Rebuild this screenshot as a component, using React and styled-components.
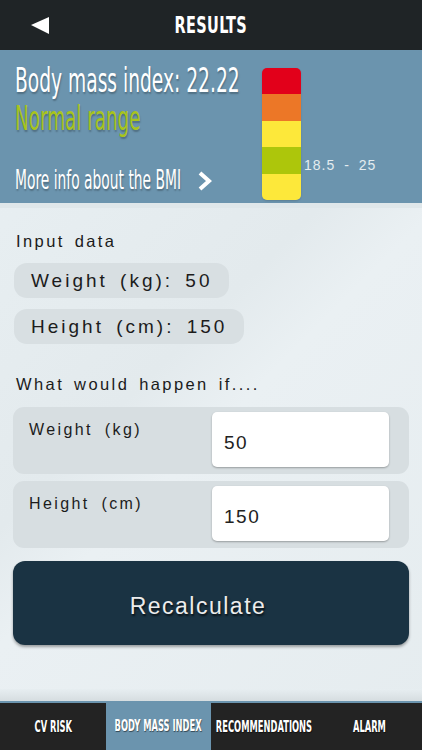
import React from 'react'
import styled, { createGlobalStyle } from 'styled-components'

const GlobalStyle = createGlobalStyle`
  html, body {
    margin: 0;
    padding: 0;
    background: #e7eef1;
  }
  * { box-sizing: border-box; }
`

const condensed = `"Liberation Sans Narrow", "DejaVu Sans Condensed", "Liberation Sans", sans-serif`
const body = `"Liberation Sans", "Noto Sans", sans-serif`

const Screen = styled.div`
  width: 422px;
  height: 750px;
  display: flex;
  flex-direction: column;
  background: linear-gradient(135deg, #eaf1f4 0%, #e3eaed 45%, #eaf0f3 55%, #e5ecef 100%);
  overflow: hidden;
`

const TopBar = styled.header`
  height: 50px;
  flex-shrink: 0;
  background: #1f2426;
  display: flex;
  align-items: center;
  justify-content: center;
  position: relative;
`

const BackButton = styled.button`
  position: absolute;
  left: 30px;
  top: 16px;
  width: 20px;
  height: 20px;
  padding: 0;
  border: none;
  background: none;
  display: flex;
`

const Title = styled.h1`
  margin: 0;
  color: #fff;
  font-family: ${condensed};
  font-weight: bold;
  font-size: 23px;
  letter-spacing: 0.5px;
  transform: scaleX(0.7);
`

const Hero = styled.section`
  height: 158px;
  flex-shrink: 0;
  background: #6b94ae;
  border-bottom: 5px solid #dfe7ea;
  display: flex;
  padding: 11px 0 0 15px;
`

const HeroText = styled.div`
  width: 247px;
  display: flex;
  flex-direction: column;
`

const Big = styled.div`
  font-family: ${condensed};
  font-size: ${p => p.size || 34}px;
  color: ${p => p.color || '#fff'};
  white-space: nowrap;
  transform: scaleX(${p => p.squeeze || 0.61});
  transform-origin: left center;
  text-shadow: 1px 2px 2px rgba(0, 0, 0, 0.25);
  line-height: ${p => p.lh || 38}px;
`

const MoreInfo = styled.a`
  margin-top: auto;
  margin-bottom: 8px;
  display: flex;
  align-items: center;
  color: #fff;
  text-decoration: none;
  position: relative;
  svg {
    position: absolute;
    left: 182px;
    top: 6px;
  }
`

const ScaleWrap = styled.div`
  display: flex;
  align-items: flex-start;
  padding-top: 7px;
`

const Scale = styled.div`
  width: 39px;
  height: 132px;
  border-radius: 5px;
  overflow: hidden;
  display: flex;
  flex-direction: column;
  box-shadow: 0 1px 2px rgba(0, 0, 0, 0.15);
`

const Band = styled.div`
  flex: 1;
  background: ${p => p.color};
`

const RangeLabel = styled.span`
  font-family: ${body};
  font-size: 14px;
  letter-spacing: 1px;
  word-spacing: 4px;
  color: #e4ecf0;
  margin: 89px 0 0 3px;
  white-space: nowrap;
`

const Content = styled.main`
  flex: 1;
  padding: 24px 13px 0 13px;
  display: flex;
  flex-direction: column;
`

const Label = styled.div`
  font-family: ${body};
  font-size: 16.5px;
  letter-spacing: 2.4px;
  word-spacing: 3px;
  color: #1b1b1b;
  padding-left: 3px;
  margin-top: ${p => p.mt || 0}px;
  margin-bottom: ${p => p.mb || 12}px;
`

const Pill = styled.div`
  align-self: flex-start;
  height: 35px;
  margin: 0 0 11px 1px;
  padding: 0 17px;
  display: flex;
  align-items: center;
  border-radius: 13px;
  background: #d8dfe2;
  font-family: ${body};
  font-size: 19px;
  letter-spacing: 3px;
  color: #1c1c1c;
  word-spacing: 4px;
`

const Card = styled.div`
  height: 67px;
  margin-bottom: 7px;
  border-radius: 11px;
  background: #d7dee1;
  display: flex;
  justify-content: space-between;
  padding: 5px 20px 0 16px;
`

const CardLabel = styled.span`
  font-family: ${body};
  font-size: 16px;
  letter-spacing: 2.4px;
  word-spacing: 5px;
  color: #1c1c1c;
  padding-top: 9px;
`

const Field = styled.input`
  width: 177px;
  height: 55px;
  border: none;
  border-radius: 5px;
  background: #fff;
  box-shadow: 0 1px 2px rgba(0, 0, 0, 0.3);
  padding: 6px 0 0 12px;
  font-family: ${body};
  font-size: 19px;
  letter-spacing: 1.5px;
  color: #222;
  outline: none;
`

const Recalc = styled.button`
  margin-top: 6px;
  height: 84px;
  border: none;
  border-radius: 12px;
  background: #1a3343;
  box-shadow: 0 2px 3px rgba(0, 0, 0, 0.35);
  color: #ececec;
  font-family: ${body};
  font-size: 23px;
  letter-spacing: 1.5px;
  padding: 6px 26px 0 0;
  text-shadow: 1px 2px 2px rgba(0, 0, 0, 0.7);
`

const Fade = styled.div`
  height: 12px;
  flex-shrink: 0;
  background: linear-gradient(#e7eef1, #d6dde0);
`

const TabBar = styled.nav`
  height: 49px;
  flex-shrink: 0;
  border-top: 2px solid #6b94ae;
  background: #232323;
  display: grid;
  grid-template-columns: 106px 105px 105px 106px;
`

const Tab = styled.div`
  display: flex;
  align-items: center;
  justify-content: center;
  background: ${p => (p.active ? '#6b94ae' : 'transparent')};
  margin-top: ${p => (p.active ? '-2px' : '0')};
  span {
    font-family: ${condensed};
    font-weight: bold;
    font-size: 16px;
    color: #fff;
    white-space: nowrap;
    transform: scaleX(0.58);
    text-shadow: 1px 1px 1px rgba(0, 0, 0, 0.5);
  }
`

const bands = ['#e2001a', '#ec7727', '#fde83a', '#adc60b', '#fde83a']
const tabs = ['CV RISK', 'BODY MASS INDEX', 'RECOMMENDATIONS', 'ALARM']

const App = () => {
  return (
    <>
      <GlobalStyle />
      <Screen>
        <TopBar>
          <BackButton aria-label="Back">
            <svg width="20" height="20" viewBox="0 0 20 20">
              <polygon points="1,9 19,1 19,18" fill="#fff" />
            </svg>
          </BackButton>
          <Title>RESULTS</Title>
        </TopBar>

        <Hero>
          <HeroText>
            <Big>Body mass index: 22.22</Big>
            <Big color="#a8c41c" squeeze={0.6}>Normal range</Big>
            <MoreInfo href="#">
              <Big size={27} squeeze={0.57} lh={30}>More info about the BMI</Big>
              <svg width="16" height="20" viewBox="0 0 16 20">
                <polyline points="3,2 12,10 3,18" fill="none" stroke="#fff" strokeWidth="4" />
              </svg>
            </MoreInfo>
          </HeroText>
          <ScaleWrap>
            <Scale>
              {bands.map((c, i) => <Band key={i} color={c} />)}
            </Scale>
            <RangeLabel>18.5 - 25</RangeLabel>
          </ScaleWrap>
        </Hero>

        <Content>
          <Label>Input data</Label>
          <Pill>Weight (kg): 50</Pill>
          <Pill>Height (cm): 150</Pill>
          <Label mt={20} mb={13}>What would happen if....</Label>
          <Card>
            <CardLabel>Weight (kg)</CardLabel>
            <Field defaultValue="50" />
          </Card>
          <Card>
            <CardLabel>Height (cm)</CardLabel>
            <Field defaultValue="150" />
          </Card>
          <Recalc>Recalculate</Recalc>
        </Content>

        <Fade />
        <TabBar>
          {tabs.map(t => (
            <Tab key={t} active={t === 'BODY MASS INDEX'}><span>{t}</span></Tab>
          ))}
        </TabBar>
      </Screen>
    </>
  )
}

export default App
